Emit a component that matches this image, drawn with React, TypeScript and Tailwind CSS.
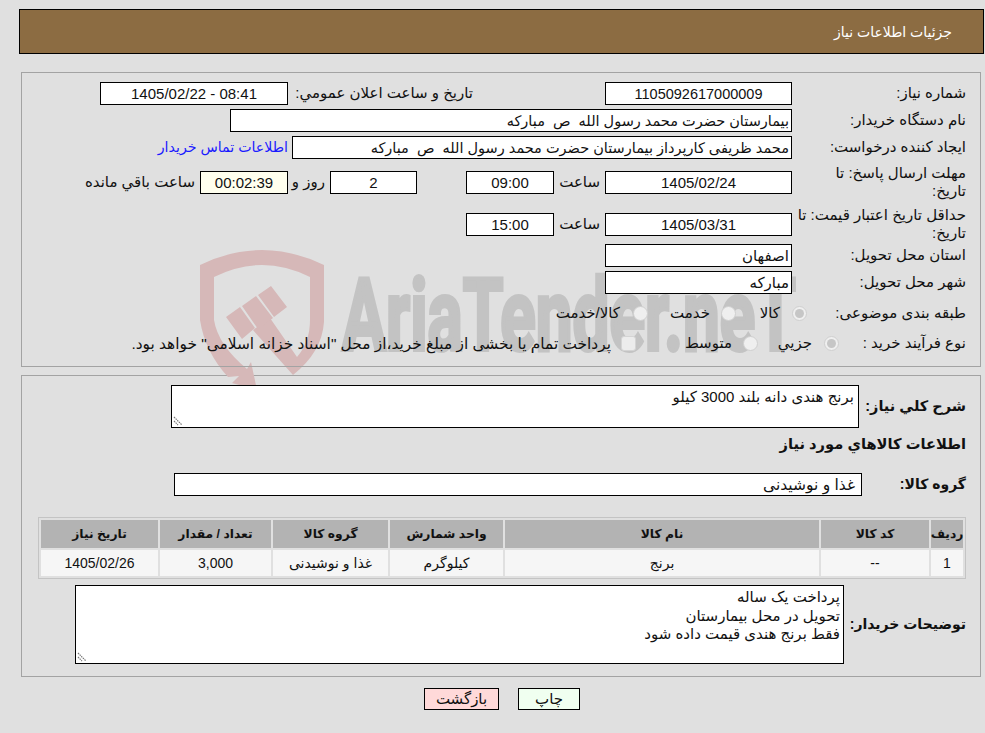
import type { ReactNode } from "react";

function Box({ w, children, align = "center", bg = "bg-white", size = "text-[15px]", pad = "pr-[2px]" }: { w: string; children?: ReactNode; align?: "center" | "right"; bg?: string; size?: string; pad?: string }) {
  return (
    <div className={`${w} ${bg} ${size} h-[23px] shrink-0 border border-black leading-[22px] overflow-hidden whitespace-pre ${align === "center" ? "text-center" : `text-right ${pad}`}`}>
      {children}
    </div>
  );
}

function Radio({ on }: { on?: boolean }) {
  return (
    <span className="relative w-[15px] h-[15px] rounded-full border border-[#cfcfcf] bg-[#efefef] flex items-center justify-center shrink-0">
      {on && <span className="w-[9px] h-[9px] rounded-full bg-[#c6c6c6]" />}
    </span>
  );
}

function Watermark() {
  return (
    <svg dir="ltr" className="absolute left-[190px] top-[240px] pointer-events-none [direction:ltr]" width="630" height="160" viewBox="190 240 630 160">
      <path fill="#d6b8b8" d="M200 265Q262 235 324 265V322Q322 352 293 375L253 330L270 318L297 357Q310 342 310 320V277Q262 253 214 277V320Q218 345 247 369L251 362L257 390L232 383L239 376L228 377Q205 352 200 320Z" />
      <path fill="#d6b8b8" d="M226 317L240 307L255 328L242 339Z M242 306L256 296L273 318L258 329Z M258 295L271 286L287 307L274 317Z" />
      <text x="342" y="350" direction="ltr" textAnchor="start" fill="#c3c3c3" stroke="#c3c3c3" strokeWidth="4" fontFamily="'Roboto','Liberation Sans',sans-serif" fontWeight="700" fontSize="100" textLength="454" lengthAdjust="spacingAndGlyphs">AriaTender.neT</text>
    </svg>
  );
}

const cols = [
  { t: "ردیف", v: "1", w: "w-[32px]" },
  { t: "کد کالا", v: "--", w: "w-[108px]" },
  { t: "نام کالا", v: "برنج", w: "w-[314px]" },
  { t: "واحد شمارش", v: "کیلوگرم", w: "w-[113px]" },
  { t: "گروه کالا", v: "غذا و نوشیدنی", w: "w-[115px]" },
  { t: "تعداد / مقدار", v: "3,000", w: "w-[111px]" },
  { t: "تاریخ نیاز", v: "1405/02/26", w: "w-[117px]" },
];

function Handle() {
  return (
    <svg className="absolute left-[1px] bottom-[1px]" width="10" height="10" viewBox="0 0 10 10" stroke="#777" strokeWidth="1.2" strokeDasharray="1.5 0.8">
      <path d="M1 1L9 9M1 5L5 9" />
    </svg>
  );
}

export default function App() {
  return (
    <div dir="rtl" className="relative w-[985px] h-[733px] overflow-hidden bg-[#e0e0e0] text-[#111] text-[15px] font-['Liberation_Sans','DejaVu_Sans',sans-serif]">
      <div className="pt-[9px] pr-[1px] pl-[19px]">
        <div className="h-[45px] border border-black bg-[#8c6c42] text-white flex items-center pr-[31px] pt-[2px] text-[14px]">جزئیات اطلاعات نیاز</div>
      </div>

      <Watermark />

      <div className="relative mt-[18px] mr-[4px] ml-[21px] h-[295px] border border-[#a3a3a3] pr-[14px] pt-[9px]">
        <div className="flex items-center h-[23px]">
          <div className="w-[174px] shrink-0">شماره نیاز:</div>
          <Box w="w-[187px]" size="text-[14.5px]">1105092617000009</Box>
          <div className="w-[132px] shrink-0" />
          <div className="w-[185px] shrink-0 whitespace-nowrap">تاریخ و ساعت اعلان عمومي:</div>
          <Box w="w-[188px]">08:41 - 1405/02/22</Box>
        </div>
        <div className="flex items-center h-[23px] mt-[4px]">
          <div className="w-[174px] shrink-0">نام دستگاه خریدار:</div>
          <Box w="w-[562px]" align="right" size="text-[14.5px]">بیمارستان حضرت محمد رسول الله  ص  مبارکه</Box>
        </div>
        <div className="flex items-center h-[23px] mt-[4px]">
          <div className="w-[174px] shrink-0">ایجاد کننده درخواست:</div>
          <Box w="w-[500px]" align="right" size="text-[14.5px]">محمد ظریفی کارپرداز بیمارستان حضرت محمد رسول الله  ص  مبارکه</Box>
          <a className="mr-[4px] text-[14.2px] text-[#1a1aff] whitespace-nowrap">اطلاعات تماس خریدار</a>
        </div>
        <div className="flex items-center h-[36px] mt-[5px]">
          <div className="w-[174px] shrink-0 leading-[18px] whitespace-nowrap">مهلت ارسال پاسخ: تا<br />تاریخ:</div>
          <Box w="w-[187px]">1405/02/24</Box>
          <div className="w-[51px] shrink-0 pr-[5px] whitespace-nowrap">ساعت</div>
          <Box w="w-[88px]">09:00</Box>
          <div className="w-[49px] shrink-0" />
          <Box w="w-[87px]">2</Box>
          <div className="w-[42px] shrink-0 pr-[5px] whitespace-nowrap">روز و</div>
          <Box w="w-[88px]" bg="bg-[#ffffee]">00:02:39</Box>
          <div className="pr-[5px] whitespace-nowrap">ساعت باقي مانده</div>
        </div>
        <div className="flex items-center h-[36px] mt-[6px]">
          <div className="w-[174px] shrink-0 leading-[18px] whitespace-nowrap">حداقل تاریخ اعتبار قیمت: تا<br />تاریخ:</div>
          <Box w="w-[187px]">1405/03/31</Box>
          <div className="w-[51px] shrink-0 pr-[5px] whitespace-nowrap">ساعت</div>
          <Box w="w-[88px]">15:00</Box>
        </div>
        <div className="flex items-center h-[23px] mt-[2px]">
          <div className="w-[174px] shrink-0">استان محل تحویل:</div>
          <Box w="w-[187px]" align="right">اصفهان</Box>
        </div>
        <div className="flex items-center h-[23px] mt-[4px]">
          <div className="w-[174px] shrink-0">شهر محل تحویل:</div>
          <Box w="w-[187px]" align="right">مبارکه</Box>
        </div>
        <div className="flex items-center h-[23px] mt-[8px]">
          <div className="w-[159px] shrink-0 whitespace-nowrap">طبقه بندی موضوعی:</div>
          <Radio on />
          <div className="w-[56px] shrink-0 pr-[12px]">کالا</div>
          <Radio />
          <div className="w-[73px] shrink-0 pr-[11px]">خدمت</div>
          <Radio />
          <div className="pr-[13px] whitespace-nowrap">کالا/خدمت</div>
        </div>
        <div className="flex items-center h-[23px] mt-[7px]">
          <div className="w-[127px] shrink-0 whitespace-nowrap">نوع فرآیند خرید :</div>
          <Radio on />
          <div className="w-[66px] shrink-0 pr-[12px]">جزيي</div>
          <Radio />
          <div className="w-[107px] shrink-0 pr-[11px]">متوسط</div>
          <span className="w-[15px] h-[15px] rounded-[3px] border border-[#d4d4d4] bg-[#ececec] shrink-0" />
          <div className="pr-[10px] whitespace-nowrap text-[15.4px]">پرداخت تمام یا بخشی از مبلغ خرید،از محل "اسناد خزانه اسلامی" خواهد بود.</div>
        </div>
      </div>

      <div className="mt-[8px] mr-[4px] ml-[21px] h-[302px] border border-[#a3a3a3] pr-[14px] pt-[9px]">
        <div className="flex items-center h-[43px]">
          <div className="w-[107px] shrink-0 font-bold text-[14.5px] whitespace-nowrap">شرح کلي نیاز:</div>
          <div className="relative w-[688px] h-[43px] border border-black bg-white pr-[4px] pt-[1px] leading-[20px]">
            برنج هندی دانه بلند 3000 کیلو
            <Handle />
          </div>
        </div>
        <div className="h-[20px] mt-[6px] font-bold text-[14.7px] leading-[20px]">اطلاعات کالاهاي مورد نیاز</div>
        <div className="flex items-center h-[23px] mt-[19px]">
          <div className="w-[104px] shrink-0 font-bold text-[14px] whitespace-nowrap">گروه کالا:</div>
          <Box w="w-[688px]" align="right" size="text-[15.5px]" pad="pr-[6px]">غذا و نوشیدنی</Box>
        </div>
        <div className="w-[928px] h-[62px] mt-[21px] border border-[#c4c4c4] p-[2px] flex flex-col gap-[2px]">
          <div className="flex gap-[2px] h-[28px]">
            {cols.map((c) => (
              <div key={c.t} className={`${c.w} shrink-0 bg-[#b3b3b3] flex items-center justify-center font-bold text-[12.3px] whitespace-nowrap`}>{c.t}</div>
            ))}
          </div>
          <div className="flex gap-[2px] h-[26px]">
            {cols.map((c) => (
              <div key={c.t} className={`${c.w} shrink-0 bg-[#f6f6f6] flex items-center justify-center text-[14px]`}>{c.v}</div>
            ))}
          </div>
        </div>
        <div className="flex items-center h-[79px] mt-[6px]">
          <div className="w-[122px] shrink-0 font-bold text-[14px] whitespace-nowrap">توضیحات خریدار:</div>
          <div className="relative w-[769px] h-[79px] border border-black bg-white pr-[3px] pt-[2px] leading-[18.5px]">
            <div>پرداخت یک ساله</div>
            <div>تحویل در محل بیمارستان</div>
            <div>فقط برنج هندی قیمت داده شود</div>
            <Handle />
          </div>
        </div>
      </div>

      <div className="flex mt-[11px] mr-[405px]">
        <button className="w-[62px] h-[22px] border border-black bg-[#f0fff0] text-[15px] leading-[20px]">چاپ</button>
        <button className="w-[75px] h-[22px] mr-[19px] border border-black bg-[#ffd9d9] text-[15px] leading-[20px]">بازگشت</button>
      </div>
    </div>
  );
}
